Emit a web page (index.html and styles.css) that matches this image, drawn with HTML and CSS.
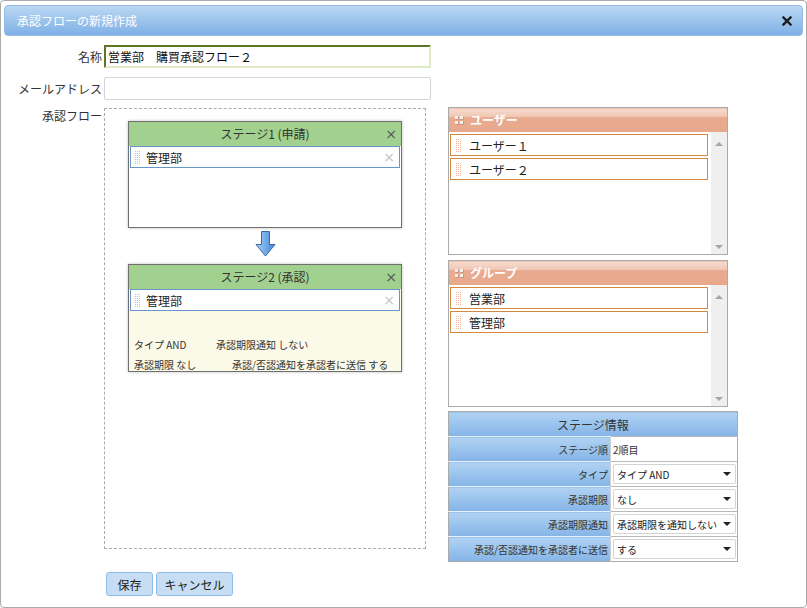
FILE: index.html
```html
<!DOCTYPE html>
<html lang="ja">
<head>
  <meta charset="UTF-8" />
  <title>承認フローの新規作成</title>
  <link rel="stylesheet" href="styles.css">
</head>
<body>
  <div class="dialog">
    <div class="titlebar">
      <span class="title">承認フローの新規作成</span>
      <svg class="close" width="10" height="10" viewBox="0 0 10 10">
        <path d="M1.5 1.5 L8.5 8.5 M8.5 1.5 L1.5 8.5" stroke="#1e1e1e" stroke-width="2.4" stroke-linecap="square" />
      </svg>
    </div>

    <div class="field">
      <label>名称</label>
      <input class="text focused" type="text" value="営業部　購買承認フロー２">
    </div>
    <div class="field">
      <label>メールアドレス</label>
      <input class="text" type="text" value="">
    </div>

    <div class="field flow-row">
      <label>承認フロー</label>
      <div class="flow">
        <div class="stage">
          <div class="stage-head"><span></span><span class="stage-name">ステージ1 (申請)</span><span class="stage-x">×</span></div>
          <div class="member"><span class="grip"></span><span class="member-name">管理部</span><span class="member-x">×</span></div>
        </div>
        <div class="arrow">
          <svg width="21" height="26" viewBox="0 0 21 26">
            <defs>
              <linearGradient id="ag" x1="0" y1="0" x2="1" y2="0">
                <stop offset="0" stop-color="#a9d2f7" />
                <stop offset="1" stop-color="#3f86d6" />
              </linearGradient>
            </defs>
            <path d="M6.5 0.5 H14.5 V13.5 H20 L10.5 25 L1 13.5 H6.5 Z" fill="url(#ag)" stroke="#3a6aa6" stroke-width="1" />
          </svg>
        </div>
        <div class="stage cream">
          <div class="stage-head"><span></span><span class="stage-name">ステージ2 (承認)</span><span class="stage-x">×</span></div>
          <div class="member"><span class="grip"></span><span class="member-name">管理部</span><span class="member-x">×</span></div>
          <div class="stage-props">
            <p><span class="prop-a">タイプ AND</span><span>承認期限通知 しない</span></p>
            <p><span class="prop-b">承認期限 なし</span><span>承認/否認通知を承認者に送信 する</span></p>
          </div>
        </div>
      </div>

      <div class="side">
        <div class="panel">
          <div class="panel-head"><span class="handle"><i></i><i></i><i></i><i></i></span>ユーザー</div>
          <div class="panel-body">
            <div class="list">
              <div class="pick"><span class="grip"></span>ユーザー１</div>
              <div class="pick"><span class="grip"></span>ユーザー２</div>
            </div>
            <div class="scroll"><span class="up"></span><span class="down"></span></div>
          </div>
        </div>
        <div class="panel">
          <div class="panel-head"><span class="handle"><i></i><i></i><i></i><i></i></span>グループ</div>
          <div class="panel-body">
            <div class="list">
              <div class="pick"><span class="grip"></span>営業部</div>
              <div class="pick"><span class="grip"></span>管理部</div>
            </div>
            <div class="scroll"><span class="up"></span><span class="down"></span></div>
          </div>
        </div>

        <table class="info">
          <tr><th colspan="2" class="info-head">ステージ情報</th></tr>
          <tr><th>ステージ順</th><td><span class="plain">2順目</span></td></tr>
          <tr><th>タイプ</th><td><div class="select">タイプ AND</div></td></tr>
          <tr><th>承認期限</th><td><div class="select">なし</div></td></tr>
          <tr><th>承認期限通知</th><td><div class="select">承認期限を通知しない</div></td></tr>
          <tr><th>承認/否認通知を承認者に送信</th><td><div class="select">する</div></td></tr>
        </table>
      </div>
    </div>

    <div class="actions">
      <button class="btn save">保存</button>
      <button class="btn cancel">キャンセル</button>
    </div>
  </div>
</body>
</html>
```

FILE: styles.css
```css
* {
  box-sizing: border-box;
}

body {
  margin: 0;
  font-family: "Noto Sans CJK JP", "Noto Sans", sans-serif;
  font-size: 12px;
  color: #333;
  background: #fff;
}

.dialog {
  width: 807px;
  height: 608px;
  border: 1px solid #aaa;
  border-radius: 4px;
  overflow: hidden;
}

.titlebar {
  margin: 4px 3px 0 3px;
  height: 31px;
  border: 1px solid #96bce3;
  border-radius: 4px;
  background: linear-gradient(#bad8f3, #7eb0e6);
  display: flex;
  align-items: center;
  justify-content: space-between;
  padding: 0 10px 0 12px;
}

.title {
  color: #fff;
  font-size: 12px;
  line-height: 16px;
}

.close {
  display: block;
}

.field {
  display: flex;
  align-items: center;
  margin-top: 9px;
}

.field label {
  width: 101px;
  margin-right: 2px;
  text-align: right;
  line-height: 16px;
  color: #333;
}

.text {
  width: 327px;
  height: 23px;
  border: 1px solid #d3d3d8;
  border-radius: 2px;
  padding: 0 3px;
  font-family: inherit;
  font-size: 12px;
  color: #111;
  outline: none;
}

.text.focused {
  border-top: 2px solid #5f7424;
  border-left: 2px solid #5f7424;
  border-right: 2px solid #dfeac6;
  border-bottom: 2px solid #dfeac6;
  border-radius: 0;
  padding: 0 2px;
}

.flow-row {
  align-items: flex-start;
  margin-top: 7px;
}

.flow-row label {
  margin-top: 1px;
}

.flow {
  width: 322px;
  height: 441px;
  margin-top: 1px;
  border: 1px dashed #aaa;
  padding: 12px 0 0 23px;
}

.stage {
  width: 274px;
  height: 107px;
  border: 1px solid #707070;
  box-shadow: 0 0 3px rgba(0, 0, 0, 0.25);
  background: #fff;
  overflow: hidden;
}

.stage.cream {
  height: 108px;
  background: #fbf9e7;
}

.stage-head {
  height: 24px;
  background: #a2d08e;
  display: grid;
  grid-template-columns: 20px 1fr 20px;
  align-items: center;
  line-height: 24px;
}

.stage-name {
  text-align: center;
  color: #333;
}

.stage-x {
  font-family: "DejaVu Sans", sans-serif;
  font-size: 14px;
  color: #555;
  text-align: center;
}

.member {
  margin: 0 1px;
  height: 22px;
  border: 1px solid #6796c8;
  background: #fff;
  display: flex;
  align-items: center;
  padding: 0 4px 0 3px;
}

.grip {
  width: 6px;
  height: 14px;
  background-color: #9fc9ea;
  background-image: linear-gradient(90deg, #fff 1px, transparent 1px), linear-gradient(#fff 1px, transparent 1px);
  background-size: 2px 2px;
  margin-right: 6px;
}

.member-name {
  flex: 1;
  color: #222;
}

.member-x {
  font-family: "DejaVu Sans", sans-serif;
  font-size: 14px;
  color: #c4c4c4;
}

.arrow {
  height: 36px;
  padding: 3px 0 0 127px;
}

.arrow svg {
  display: block;
}

.stage-props {
  padding: 24px 0 0 5px;
  font-size: 10px;
  color: #333;
}

.stage-props p {
  margin: 0;
  height: 20px;
  line-height: 20px;
  display: flex;
}

.prop-a {
  width: 82px;
}

.prop-b {
  width: 98px;
}

.side {
  margin-left: 22px;
  width: 290px;
}

.panel {
  width: 280px;
  height: 148px;
  border: 1px solid #aaa;
  display: flex;
  flex-direction: column;
}

.panel + .panel {
  margin-top: 5px;
  height: 147px;
}

.panel-head {
  height: 24px;
  flex: none;
  background: linear-gradient(#ecc0ab 0, #f6d9cc 8%, #f0c7b4 35%, #e9ab90 40%, #e8a88c 100%);
  color: #fff;
  font-weight: bold;
  line-height: 24px;
  display: flex;
  align-items: center;
  padding-left: 6px;
}

.handle {
  display: grid;
  grid-template-columns: 3px 3px;
  gap: 2px;
  margin-right: 7px;
}

.handle i {
  width: 3px;
  height: 3px;
  background: #f6f0ec;
  box-shadow: 0.5px 0.5px 0 #a0806e;
}

.panel-body {
  flex: 1;
  display: flex;
}

.list {
  flex: 1;
  padding: 2px 3px 0 1px;
}

.pick {
  height: 22px;
  border: 1px solid #d3893f;
  margin-bottom: 2px;
  display: flex;
  align-items: center;
  padding-left: 4px;
  color: #222;
}

.pick .grip {
  background-color: #f0b6a0;
  height: 14px;
  margin-right: 8px;
}

.scroll {
  width: 16px;
  background: #efefef;
  display: flex;
  flex-direction: column;
  justify-content: space-between;
  align-items: center;
  padding: 10px 0 5px;
}

.up,
.down {
  width: 0;
  height: 0;
  border-left: 4px solid transparent;
  border-right: 4px solid transparent;
}

.up {
  border-bottom: 4px solid #a6a6a6;
}

.down {
  border-top: 4px solid #a6a6a6;
}

.info {
  margin-top: 4px;
  width: 290px;
  border-collapse: collapse;
  border: 1px solid #aaa;
}

.info th,
.info td {
  height: 25px;
  padding: 0;
  border-top: 1px solid #b8b8b8;
}

.info th {
  width: 162px;
  background: linear-gradient(#b1d3f3, #84b4e7);
  font-weight: normal;
  font-size: 10px;
  text-align: right;
  padding-right: 2px;
  color: #333;
  border-top-color: #e8f1fb;
}

.info .info-head {
  font-size: 12px;
  text-align: center;
  padding: 0;
  border-top: none;
}

.info td {
  background: #fff;
  padding: 0 1px 0 2px;
  font-size: 10px;
  border-left: 1px solid #d0d0d0;
}

.select {
  height: 20px;
  border: 1px solid #d4d4d4;
  border-radius: 2px;
  display: flex;
  align-items: center;
  justify-content: space-between;
  padding: 0 4px 0 3px;
  color: #222;
}

.select::after {
  content: "";
  border-left: 4px solid transparent;
  border-right: 4px solid transparent;
  border-top: 4px solid #222;
}

.actions {
  display: flex;
  gap: 3px;
  margin: 10px 0 0 105px;
}

.btn {
  height: 24px;
  border: 1px solid #8fbbe8;
  border-radius: 3px;
  background: #c6ddf4;
  font-family: inherit;
  font-size: 12px;
  color: #222;
  padding: 0;
}

.save {
  width: 47px;
}

.cancel {
  width: 77px;
}
```
